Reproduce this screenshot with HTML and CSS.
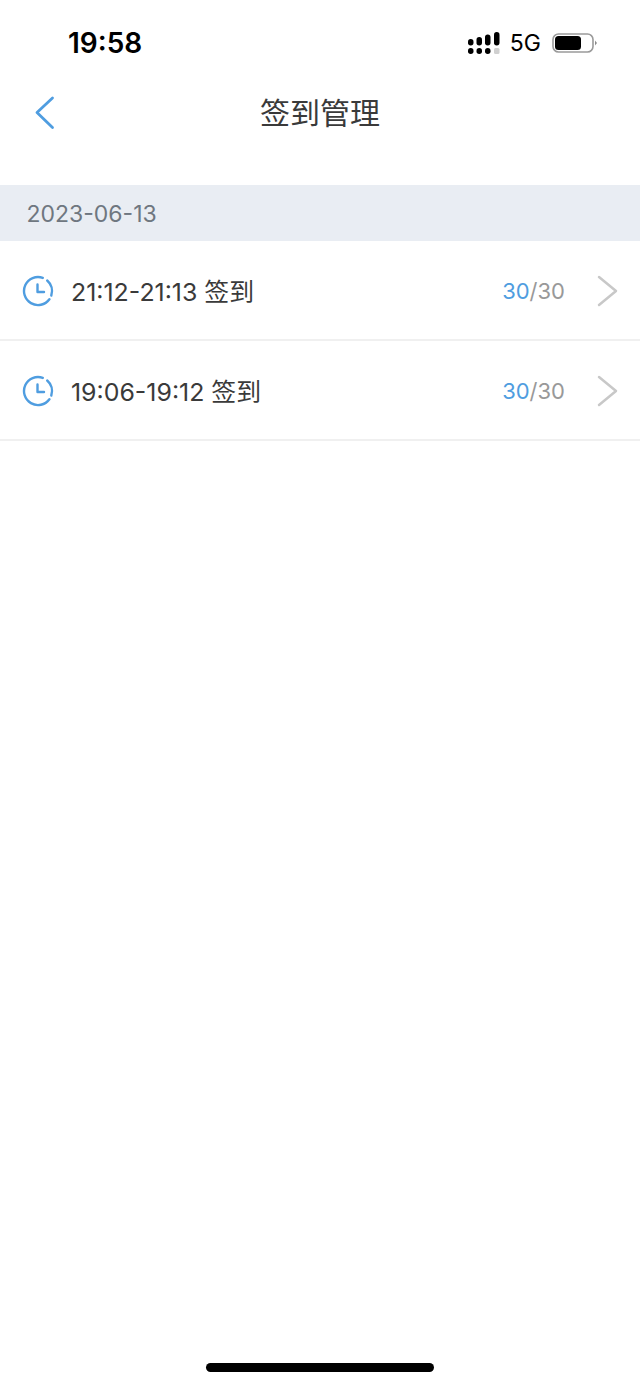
FILE: index.html
```html
<!DOCTYPE html>
<html lang="zh">
<head>
<meta charset="utf-8">
<title>签到管理</title>
<link rel="stylesheet" href="styles.css">
</head>
<body>
<div class="page">
  <div class="status">
    <span class="time">19:58</span>
    <div class="status-right">
      <svg class="signal" width="34" height="24" viewBox="0 0 34 24">
        <g fill="#000">
          <rect x="1" y="8" width="5.5" height="6.5" rx="2.7"/><rect x="1" y="17" width="5.5" height="6" rx="2.7"/>
          <rect x="9.5" y="6" width="5.5" height="8.5" rx="2.7"/><rect x="9.5" y="17" width="5.5" height="6" rx="2.7"/>
          <rect x="18" y="3.5" width="5.5" height="11" rx="2.7"/><rect x="18" y="17" width="5.5" height="6" rx="2.7"/>
          <rect x="27" y="1" width="5.5" height="13.5" rx="2.7"/>
        </g>
        <rect x="27" y="17" width="5.5" height="6" rx="1.5" fill="#d0d0d0"/>
      </svg>
      <span class="net">5G</span>
      <svg class="battery" width="45" height="22" viewBox="0 0 45 22">
        <rect x="1" y="2" width="40" height="18" rx="5.5" fill="none" stroke="#9a9a9a" stroke-width="1.6"/>
        <rect x="3" y="4" width="26" height="14" rx="3.5" fill="#000"/>
        <path d="M43 8.5 L45 11 L43 13.5 Z" fill="#8a8a8a"/>
      </svg>
    </div>
  </div>
  <header class="nav">
    <svg class="back" width="24" height="36" viewBox="0 0 24 36">
      <path d="M19.5 3 L4 17.5 L19.5 32.5" fill="none" stroke="#4f9de0" stroke-width="2.8" stroke-linecap="round" stroke-linejoin="round"/>
    </svg>
    <h1 class="title">签到管理</h1>
  </header>
  <div class="date">2023-06-13</div>
  <ul class="list">
    <li class="row">
      <svg class="clock" width="32" height="32" viewBox="0 0 32 32">
        <path d="M20.8 2.9 A14 14 0 1 0 27.4 24.2" fill="none" stroke="#4f9de0" stroke-width="2.4" stroke-linecap="round"/>
        <path d="M29.3 20.5 A14 14 0 0 0 25.2 5.5" fill="none" stroke="#4f9de0" stroke-width="2.4" stroke-linecap="round"/>
        <path d="M15.5 9.5 V17 H22" fill="none" stroke="#4f9de0" stroke-width="2.4" stroke-linecap="round" stroke-linejoin="round"/>
      </svg>
      <span class="label">21:12-21:13 签到</span>
      <span class="count"><span class="done">30</span><span class="sep">/</span>30</span>
      <svg class="chev" width="22" height="32" viewBox="0 0 22 32">
        <path d="M2 2 L19 16 L2 30" fill="none" stroke="#c8c8c8" stroke-width="2.5" stroke-linecap="round" stroke-linejoin="round"/>
      </svg>
    </li>
    <li class="row">
      <svg class="clock" width="32" height="32" viewBox="0 0 32 32">
        <path d="M20.8 2.9 A14 14 0 1 0 27.4 24.2" fill="none" stroke="#4f9de0" stroke-width="2.4" stroke-linecap="round"/>
        <path d="M29.3 20.5 A14 14 0 0 0 25.2 5.5" fill="none" stroke="#4f9de0" stroke-width="2.4" stroke-linecap="round"/>
        <path d="M15.5 9.5 V17 H22" fill="none" stroke="#4f9de0" stroke-width="2.4" stroke-linecap="round" stroke-linejoin="round"/>
      </svg>
      <span class="label">19:06-19:12 签到</span>
      <span class="count"><span class="done">30</span><span class="sep">/</span>30</span>
      <svg class="chev" width="22" height="32" viewBox="0 0 22 32">
        <path d="M2 2 L19 16 L2 30" fill="none" stroke="#c8c8c8" stroke-width="2.5" stroke-linecap="round" stroke-linejoin="round"/>
      </svg>
    </li>
  </ul>
  <div class="spacer"></div>
  <div class="home-wrap"><div class="home"></div></div>
</div>
</body>
</html>
```
FILE: styles.css
```css
* { box-sizing: border-box; }
html, body { margin: 0; padding: 0; background: #fff; }
body { font-family: Inter, "Noto Sans CJK SC", sans-serif; }
.page { width: 640px; height: 1385px; display: flex; flex-direction: column; overflow: hidden; }
.status { height: 70px; padding: 15px 43px 0 68px; display: flex; align-items: center; justify-content: space-between; }
.time { font-size: 28px; font-weight: 600; color: #000; }
.status-right { display: flex; align-items: center; gap: 9px; }
.net { font-size: 23px; color: #000; margin-right: 2px; }
.nav { height: 115px; padding: 9px 0 0 33px; display: flex; align-items: flex-start; position: relative; }
.back { margin-top: 16px; }
.title { position: absolute; left: 0; right: 0; top: 23px; margin: 0; text-align: center; font-size: 30px; line-height: 40px; font-weight: 400; color: #3a3a3a; }
.date { height: 56px; background: #e9edf3; padding-left: 26.5px; font-size: 23px; line-height: 58px; color: #6f7780; }
.list { margin: 0; padding: 0; list-style: none; }
.row { height: 100px; border-bottom: 2px solid #f0f0f0; display: flex; align-items: center; padding: 2px 21px 0 21.5px; }
.clock { flex: none; }
.label { margin-left: 17.5px; padding-bottom: 2px; font-size: 24.9px; color: #3a3a3a; flex: 1; }
.count { font-size: 22px; color: #999; margin-right: 32px; }
.done { color: #4f9de0; }
.chev { flex: none; }
.spacer { flex: 1; }
.home-wrap { height: 22px; display: flex; justify-content: center; }
.home { width: 228px; height: 9px; border-radius: 5px; background: #000; }
```
